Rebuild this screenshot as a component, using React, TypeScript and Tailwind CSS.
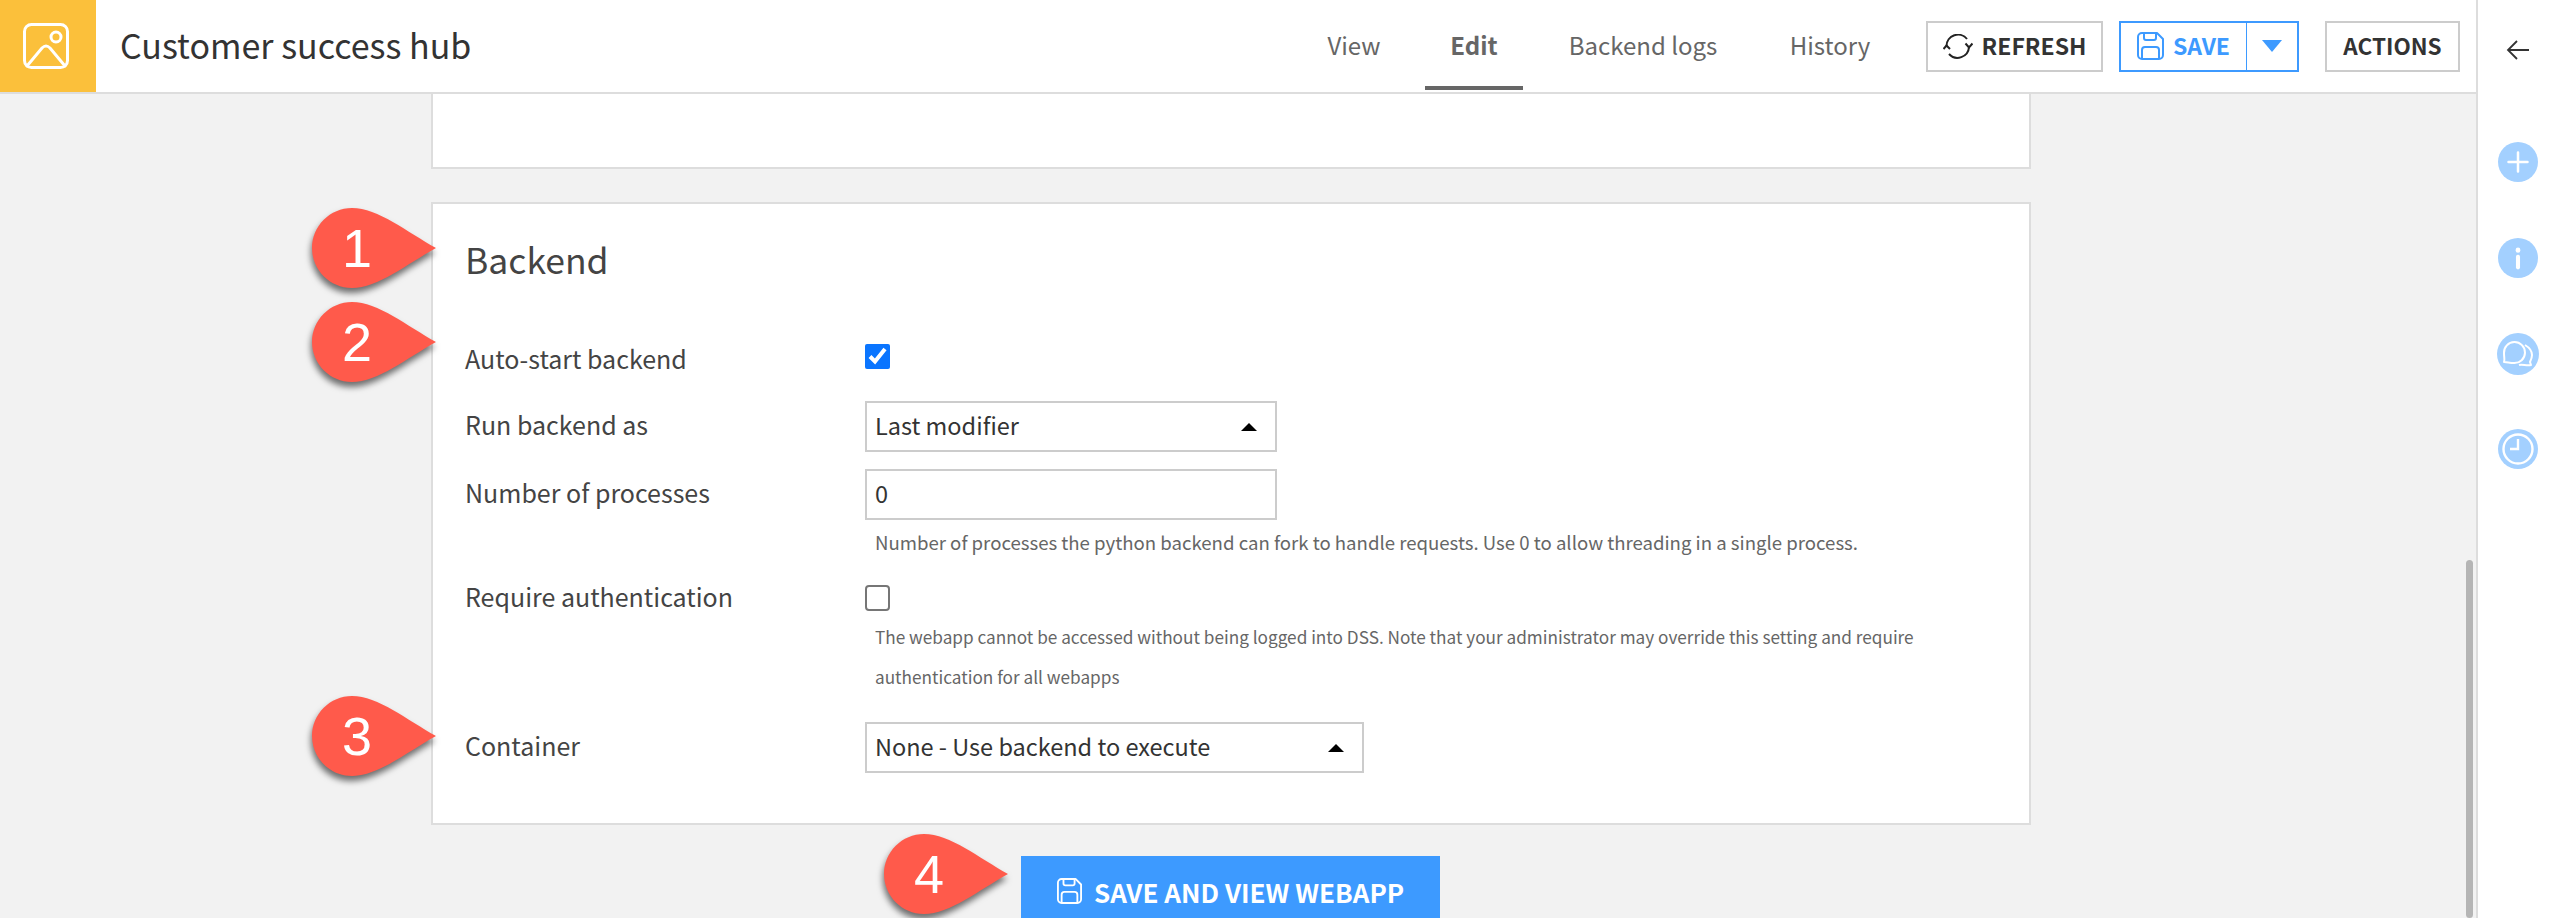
import { FC, ReactNode } from "react";

const FloppyIcon: FC<{ className?: string }> = ({ className }) => (
  <svg viewBox="0 0 27 28" fill="none" stroke="currentColor" strokeWidth="2" strokeLinejoin="round" className={className}>
    <path d="M5 1h15l6 6v16a4 4 0 0 1-4 4h-17a4 4 0 0 1-4-4v-18a4 4 0 0 1 4-4z" />
    <path d="M7 1v5a2 2 0 0 0 2 2h8a2 2 0 0 0 2-2v-5" />
    <path d="M5 27v-9a3 3 0 0 1 3-3h11a3 3 0 0 1 3 3v9" />
  </svg>
);

const Marker: FC<{ n: string; className: string }> = ({ n, className }) => (
  <div className={`absolute w-[124px] h-[80px] ${className}`}>
    <svg viewBox="0 0 124 80" className="w-[124px] h-[80px] overflow-visible drop-shadow-[-1px_5px_3px_rgba(0,0,0,0.55)]">
      <path d="M40 0C66 0 95 24 124 40C95 56 66 80 40 80C18 80 0 62 0 40C0 18 18 0 40 0Z" fill="#ff5a4b" />
    </svg>
    <span className="absolute left-0 top-0 w-[90px] h-[80px] flex items-center justify-center text-white text-[54px] font-['Liberation_Sans',sans-serif]">
      {n}
    </span>
  </div>
);

const Row: FC<{ label: string; className?: string; children: ReactNode }> = ({ label, className, children }) => (
  <div className={`flex ${className ?? ""}`}>
    <div className="w-[400px] flex-none text-[25px] leading-[47px] text-[#444]">{label}</div>
    <div className="flex-1">{children}</div>
  </div>
);

const SelectBox: FC<{ value: string; className: string }> = ({ value, className }) => (
  <div className={`flex items-center justify-between h-[51px] border-2 border-[#ccc] pl-[8px] pr-[18px] text-[23.5px] text-[#333] ${className}`}>
    <span className="pb-[2px]">{value}</span>
    <span className="w-0 h-0 border-x-[8px] border-x-transparent border-b-[8px] border-b-black" />
  </div>
);

const Help: FC<{ children: ReactNode; className: string }> = ({ children, className }) => (
  <p className={`pl-[10px] leading-[40px] text-[#666] ${className}`}>{children}</p>
);

const SideDot: FC<{ children: ReactNode; className?: string }> = ({ children, className }) => (
  <div className={`rounded-full bg-[#a3d0ff] flex items-center justify-center ${className ?? ""}`}>
    {children}
  </div>
);

const Tab: FC<{ label: string; active?: boolean; className: string }> = ({ label, active, className }) => (
  <div className={`relative h-[92px] pb-[2px] flex items-center justify-center whitespace-nowrap text-[24px] text-[#666] ${active ? "font-semibold" : ""} ${className}`}>
    {label}
    {active && <div className="absolute bottom-[2px] left-0 right-0 h-[4px] bg-[#666]" />}
  </div>
);

export default function App() {
  return (
    <div className="relative w-[2550px] h-[918px] overflow-hidden flex bg-[#f2f2f2] font-['Noto_Sans_CJK_SC','Open_Sans',sans-serif]">
      <div className="flex-1 flex flex-col min-w-0">
        <header className="h-[94px] flex-none flex items-stretch bg-white border-b-2 border-[#ddd]">
          <div className="w-[96px] h-[92px] flex-none flex items-center justify-center pr-[4px] bg-[#fbc03b]">
            <svg viewBox="0 0 46 46" fill="none" stroke="white" strokeWidth="3" className="w-[46px] h-[46px]">
              <rect x="1.500" y="1.500" width="43" height="43" rx="7" />
              <circle cx="33" cy="14" r="5" />
              <path d="M4 43L19 25Q23 21 27 25L42 43" strokeLinecap="round" />
            </svg>
          </div>
          <h1 className="ml-[24px] mb-[3px] self-center text-[34px] text-[#333]">Customer success hub</h1>
          <nav className="ml-auto flex items-center mr-[16px]">
            <Tab label="View" className="w-[52px] mr-[45px]" />
            <Tab label="Edit" active className="w-[98px] mr-[46px]" />
            <Tab label="Backend logs" className="w-[148px] mr-[73px]" />
            <Tab label="History" className="w-[80px] mr-[56px]" />
            <button className="w-[177px] h-[51px] flex items-center justify-center gap-[9px] border-2 border-[#ccc] text-[23px] font-semibold text-[#333]">
              <svg viewBox="0 0 30 25" fill="none" stroke="#222" strokeWidth="2" className="w-[30px] h-[25px]">
                <path d="M3.500 12A11.500 11.500 0 0 1 24 5" />
                <path d="M26 13A11.500 11.500 0 0 1 6 20" />
                <path d="M0.500 15L3.500 11.500L7 15" />
                <path d="M22.500 9.500L26 13.500L29.500 9.500" />
              </svg>
              <span className="pb-[2px]">REFRESH</span>
            </button>
            <div className="ml-[16px] w-[180px] h-[51px] flex border-2 border-[#3d9aff] text-[#3d9aff]">
              <div className="flex-1 flex items-center justify-center gap-[9px] border-r border-[#3d9aff] text-[23px] font-semibold">
                <FloppyIcon className="w-[27px] h-[28px]" />
                <span className="pb-[2px]">SAVE</span>
              </div>
              <div className="w-[50px] flex items-center justify-center">
                <span className="w-0 h-0 border-x-[10px] border-x-transparent border-t-[12px] border-t-[#3d9aff]" />
              </div>
            </div>
            <button className="ml-[26px] w-[135px] h-[51px] border-2 border-[#ccc] text-[22.5px] font-semibold text-[#333]">
              ACTIONS
            </button>
          </nav>
        </header>

        <main className="relative flex-1 min-h-0">
          <div className="ml-[431px] w-[1600px] h-[75px] bg-white border-x-2 border-b-2 border-[#ddd]" />
          <section className="relative ml-[431px] w-[1600px] h-[623px] mt-[33px] bg-white border-2 border-[#ddd] pl-[32px] pt-[30px]">
            <h2 className="text-[35.5px] leading-[50px] text-[#444]">Backend</h2>
            <Row label="Auto-start backend" className="mt-[51px] h-[51px]">
              <input type="checkbox" defaultChecked className="block mt-[9px] w-[25px] h-[25px] accent-[#0a75ff]" />
            </Row>
            <Row label="Run backend as" className="mt-[15px]">
              <SelectBox value="Last modifier" className="w-[412px]" />
            </Row>
            <Row label="Number of processes" className="mt-[17px]">
              <div className="w-[412px] h-[51px] flex items-center border-2 border-[#ccc] pl-[8px] pb-[2px] text-[23.5px] text-[#333]">0</div>
              <Help className="mt-[2px] text-[18.6px]">Number of processes the python backend can fork to handle requests. Use 0 to allow threading in a single process.</Help>
            </Row>
            <Row label="Require authentication" className="mt-[11px]">
              <input type="checkbox" className="block appearance-none mt-[12px] w-[25px] h-[26px] rounded-[4px] border-2 border-[#767676] bg-white" />
              <div className="mt-[6px] w-[1080px]">
                <Help className="text-[17.2px]">The webapp cannot be accessed without being logged into DSS. Note that your administrator may override this setting and require authentication for all webapps</Help>
              </div>
            </Row>
            <Row label="Container" className="mt-[25px]">
              <SelectBox value="None - Use backend to execute" className="w-[499px]" />
            </Row>
          </section>
          <button className="ml-[1021px] mt-[31px] w-[419px] h-[70px] flex items-center justify-center gap-[12px] bg-[#3d9aff] text-white text-[26px] font-semibold">
            <FloppyIcon className="w-[25px] h-[26px]" />
            SAVE AND VIEW WEBAPP
          </button>
          <Marker n="1" className="left-[312px] top-[114px]" />
          <Marker n="2" className="left-[312px] top-[208px]" />
          <Marker n="3" className="left-[312px] top-[602px]" />
          <Marker n="4" className="left-[884px] top-[740px]" />
          <div className="absolute right-[3px] top-[466px] bottom-0 w-[7px] rounded-full bg-[#b5b5b5]" />
        </main>
      </div>

      <aside className="w-[74px] flex-none flex flex-col items-center bg-white border-l-2 border-[#ddd] pl-[8px]">
        <svg viewBox="0 0 24 24" fill="none" stroke="#333" strokeWidth="1.800" className="mt-[38px] w-[24px] h-[24px]">
          <path d="M23 12H2M11 3l-9 9 9 9" />
        </svg>
        <SideDot className="mt-[80px] w-[40px] h-[40px]">
          <svg viewBox="0 0 24 24" fill="none" stroke="white" strokeWidth="2.500" strokeLinecap="round" className="w-[24px] h-[24px]">
            <path d="M12 2.500v19M2.500 12h19" />
          </svg>
        </SideDot>
        <SideDot className="mt-[56px] w-[40px] h-[40px]">
          <svg viewBox="0 0 24 24" fill="none" stroke="white" strokeLinecap="round" className="w-[28px] h-[28px]">
            <path d="M12 11v9" strokeWidth="3.500" />
            <path d="M12 5v.5" strokeWidth="4" />
          </svg>
        </SideDot>
        <SideDot className="mt-[55px] w-[42px] h-[42px]">
          <svg viewBox="0 0 42 42" fill="none" stroke="white" strokeWidth="2" strokeLinejoin="round" className="w-[42px] h-[42px]">
            <path d="M7 29C8 27 7 25 7 20A10.500 10.500 0 1 1 17 30C13 30 10 29 7 29Z" />
            <path d="M28 12C33 15 35 18 35 22C35 25 34 27 33 29L34 32C30 33 25 31 22 32" />
          </svg>
        </SideDot>
        <SideDot className="mt-[54px] w-[40px] h-[40px]">
          <svg viewBox="0 0 40 40" fill="none" stroke="white" strokeWidth="2.400" className="w-[40px] h-[40px]">
            <circle cx="20" cy="20" r="14.500" />
            <path d="M20 10v10h-8" />
          </svg>
        </SideDot>
      </aside>
    </div>
  );
}
